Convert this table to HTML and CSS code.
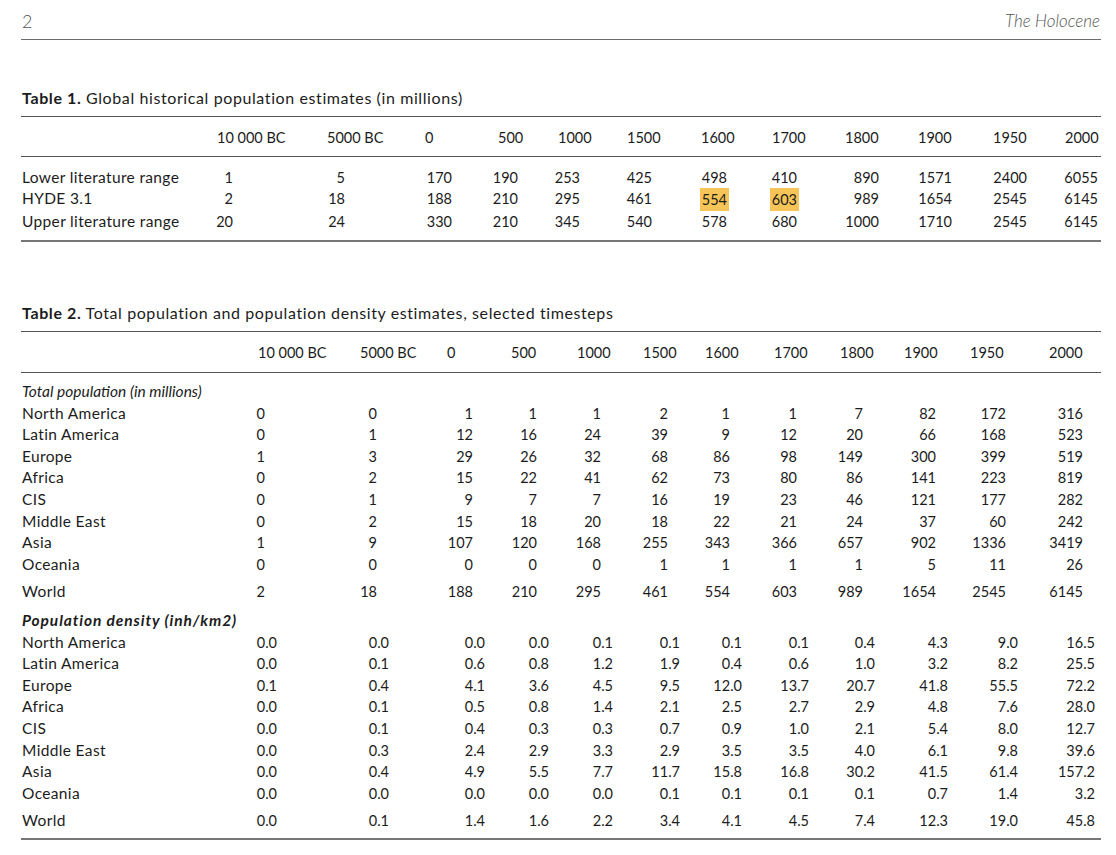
FILE: index.html
```html
<!DOCTYPE html>
<html lang="en">
<head>
<meta charset="utf-8">
<title>The Holocene – Tables 1 and 2</title>
<link rel="stylesheet" href="styles.css">
</head>
<body>
<div class="page">
  <header class="running-head">
    <span class="folio">2</span>
    <span class="journal">The Holocene</span>
  </header>

  <section class="table t1">
    <p class="caption"><b>Table 1.</b> Global historical population estimates (in millions)</p>
    <div class="row head">
      <span></span><span>10 000 BC</span><span>5000 BC</span><span>0</span><span>500</span><span>1000</span><span>1500</span><span>1600</span><span>1700</span><span>1800</span><span>1900</span><span>1950</span><span>2000</span>
    </div>
    <div class="body">
      <div class="row data">
        <span class="lbl">Lower literature range</span><span>1</span><span>5</span><span>170</span><span>190</span><span>253</span><span>425</span><span>498</span><span>410</span><span>890</span><span>1571</span><span>2400</span><span>6055</span>
      </div>
      <div class="row data">
        <span class="lbl">HYDE 3.1</span><span>2</span><span>18</span><span>188</span><span>210</span><span>295</span><span>461</span><span><mark class="hl">554</mark></span><span><mark class="hl">603</mark></span><span>989</span><span>1654</span><span>2545</span><span>6145</span>
      </div>
      <div class="row data">
        <span class="lbl">Upper literature range</span><span>20</span><span>24</span><span>330</span><span>210</span><span>345</span><span>540</span><span>578</span><span>680</span><span>1000</span><span>1710</span><span>2545</span><span>6145</span>
      </div>
    </div>
  </section>

  <section class="table t2">
    <p class="caption"><b>Table 2.</b> Total population and population density estimates, selected timesteps</p>
    <div class="row head">
      <span></span><span>10 000 BC</span><span>5000 BC</span><span>0</span><span>500</span><span>1000</span><span>1500</span><span>1600</span><span>1700</span><span>1800</span><span>1900</span><span>1950</span><span>2000</span>
    </div>
    <div class="body">
      <div class="sub">Total population (in millions)</div>
      <div class="row data int"><span class="lbl">North America</span><span>0</span><span>0</span><span>1</span><span>1</span><span>1</span><span>2</span><span>1</span><span>1</span><span>7</span><span>82</span><span>172</span><span>316</span></div>
      <div class="row data int"><span class="lbl">Latin America</span><span>0</span><span>1</span><span>12</span><span>16</span><span>24</span><span>39</span><span>9</span><span>12</span><span>20</span><span>66</span><span>168</span><span>523</span></div>
      <div class="row data int"><span class="lbl">Europe</span><span>1</span><span>3</span><span>29</span><span>26</span><span>32</span><span>68</span><span>86</span><span>98</span><span>149</span><span>300</span><span>399</span><span>519</span></div>
      <div class="row data int"><span class="lbl">Africa</span><span>0</span><span>2</span><span>15</span><span>22</span><span>41</span><span>62</span><span>73</span><span>80</span><span>86</span><span>141</span><span>223</span><span>819</span></div>
      <div class="row data int"><span class="lbl">CIS</span><span>0</span><span>1</span><span>9</span><span>7</span><span>7</span><span>16</span><span>19</span><span>23</span><span>46</span><span>121</span><span>177</span><span>282</span></div>
      <div class="row data int"><span class="lbl">Middle East</span><span>0</span><span>2</span><span>15</span><span>18</span><span>20</span><span>18</span><span>22</span><span>21</span><span>24</span><span>37</span><span>60</span><span>242</span></div>
      <div class="row data int"><span class="lbl">Asia</span><span>1</span><span>9</span><span>107</span><span>120</span><span>168</span><span>255</span><span>343</span><span>366</span><span>657</span><span>902</span><span>1336</span><span>3419</span></div>
      <div class="row data int"><span class="lbl">Oceania</span><span>0</span><span>0</span><span>0</span><span>0</span><span>0</span><span>1</span><span>1</span><span>1</span><span>1</span><span>5</span><span>11</span><span>26</span></div>
      <div class="row data int total"><span class="lbl">World</span><span>2</span><span>18</span><span>188</span><span>210</span><span>295</span><span>461</span><span>554</span><span>603</span><span>989</span><span>1654</span><span>2545</span><span>6145</span></div>

      <div class="sub strong">Population density (inh/km2)</div>
      <div class="row data"><span class="lbl">North America</span><span>0.0</span><span>0.0</span><span>0.0</span><span>0.0</span><span>0.1</span><span>0.1</span><span>0.1</span><span>0.1</span><span>0.4</span><span>4.3</span><span>9.0</span><span>16.5</span></div>
      <div class="row data"><span class="lbl">Latin America</span><span>0.0</span><span>0.1</span><span>0.6</span><span>0.8</span><span>1.2</span><span>1.9</span><span>0.4</span><span>0.6</span><span>1.0</span><span>3.2</span><span>8.2</span><span>25.5</span></div>
      <div class="row data"><span class="lbl">Europe</span><span>0.1</span><span>0.4</span><span>4.1</span><span>3.6</span><span>4.5</span><span>9.5</span><span>12.0</span><span>13.7</span><span>20.7</span><span>41.8</span><span>55.5</span><span>72.2</span></div>
      <div class="row data"><span class="lbl">Africa</span><span>0.0</span><span>0.1</span><span>0.5</span><span>0.8</span><span>1.4</span><span>2.1</span><span>2.5</span><span>2.7</span><span>2.9</span><span>4.8</span><span>7.6</span><span>28.0</span></div>
      <div class="row data"><span class="lbl">CIS</span><span>0.0</span><span>0.1</span><span>0.4</span><span>0.3</span><span>0.3</span><span>0.7</span><span>0.9</span><span>1.0</span><span>2.1</span><span>5.4</span><span>8.0</span><span>12.7</span></div>
      <div class="row data"><span class="lbl">Middle East</span><span>0.0</span><span>0.3</span><span>2.4</span><span>2.9</span><span>3.3</span><span>2.9</span><span>3.5</span><span>3.5</span><span>4.0</span><span>6.1</span><span>9.8</span><span>39.6</span></div>
      <div class="row data"><span class="lbl">Asia</span><span>0.0</span><span>0.4</span><span>4.9</span><span>5.5</span><span>7.7</span><span>11.7</span><span>15.8</span><span>16.8</span><span>30.2</span><span>41.5</span><span>61.4</span><span>157.2</span></div>
      <div class="row data"><span class="lbl">Oceania</span><span>0.0</span><span>0.0</span><span>0.0</span><span>0.0</span><span>0.0</span><span>0.1</span><span>0.1</span><span>0.1</span><span>0.1</span><span>0.7</span><span>1.4</span><span>3.2</span></div>
      <div class="row data total"><span class="lbl">World</span><span>0.0</span><span>0.1</span><span>1.4</span><span>1.6</span><span>2.2</span><span>3.4</span><span>4.1</span><span>4.5</span><span>7.4</span><span>12.3</span><span>19.0</span><span>45.8</span></div>
    </div>
  </section>
</div>
</body>
</html>
```

FILE: styles.css
```css
* {
  box-sizing: border-box;
  margin: 0;
  padding: 0;
}

body {
  margin: 0;
  background: #ffffff;
  color: #1c1c1c;
  font-family: Lato, "Open Sans", "Liberation Sans", sans-serif;
  font-size: 14.5px;
}

.page {
  width: 1116px;
  padding: 0 15px 0 21px;
}

/* running head */
.running-head {
  display: flex;
  justify-content: space-between;
  align-items: center;
  height: 40px;
  padding: 11px 0 8px 1px;
  border-bottom: 1px solid #6a6a6a;
  line-height: 20px;
  color: #555;
}

.folio {
  font-size: 18px;
  font-weight: 300;
}

.journal {
  font-size: 17px;
  font-style: italic;
  font-weight: 300;
  padding-right: 1px;
}

/* tables */
.caption {
  line-height: 20px;
  font-size: 16px;
  letter-spacing: 0.6px;
  padding-left: 1px;
  margin-bottom: 8px;
}

.caption b {
  font-weight: 700;
}

.t1 {
  margin-top: 48px;
}

.t2 {
  margin-top: 61px;
}

.row {
  display: grid;
  white-space: nowrap;
}

.row > span {
  display: block;
}

.head {
  border-top: 1px solid #555;
  border-bottom: 1px solid #555;
  line-height: 20px;
  padding: 11px 0 8px;
}

.body {
  border-bottom: 2px solid #777;
}

.lbl {
  padding-left: 1px;
  font-size: 15.5px;
  letter-spacing: 0.35px;
}

.data > span:not(.lbl) {
  text-align: right;
}

/* Table 1 column tracks */
.t1 .head {
  grid-template-columns: 196px 110px 98px 73px 60px 69px 74px 71px 73px 73px 75px 72px 36px;
}

.t1 .data {
  grid-template-columns: 169px 43px 112px 107px 66px 62px 72px 75px 70px 82px 73px 75px 71px 3px;
  line-height: 21px;
}

.t1 .body {
  padding: 10px 0 8px;
}

.hl {
  background: #f7c457;
  color: inherit;
  display: inline-block;
  line-height: 23px;
  padding: 0 2px;
  margin-right: -2px;
}

/* Table 2 column tracks */
.t2 .head {
  grid-template-columns: 237px 102px 87px 64px 66px 66px 62px 69px 66px 64px 66px 79px 52px;
  padding-bottom: 9px;
}

.t2 .data {
  grid-template-columns: 219px 37px 112px 96px 64px 64px 67px 62px 67px 66px 73px 70px 77px 6px;
  line-height: 21.6px;
}

.t2 .int > span:not(.lbl) {
  padding-right: 12px;
}

.t2 .body {
  padding: 8px 0 6px;
}

.sub {
  line-height: 21.6px;
  font-style: italic;
  font-size: 15.5px;
  padding-left: 1px;
}

.sub.strong {
  font-weight: 700;
  letter-spacing: 0.9px;
  margin-top: 7px;
}

.total {
  margin-top: 6px;
}
```
